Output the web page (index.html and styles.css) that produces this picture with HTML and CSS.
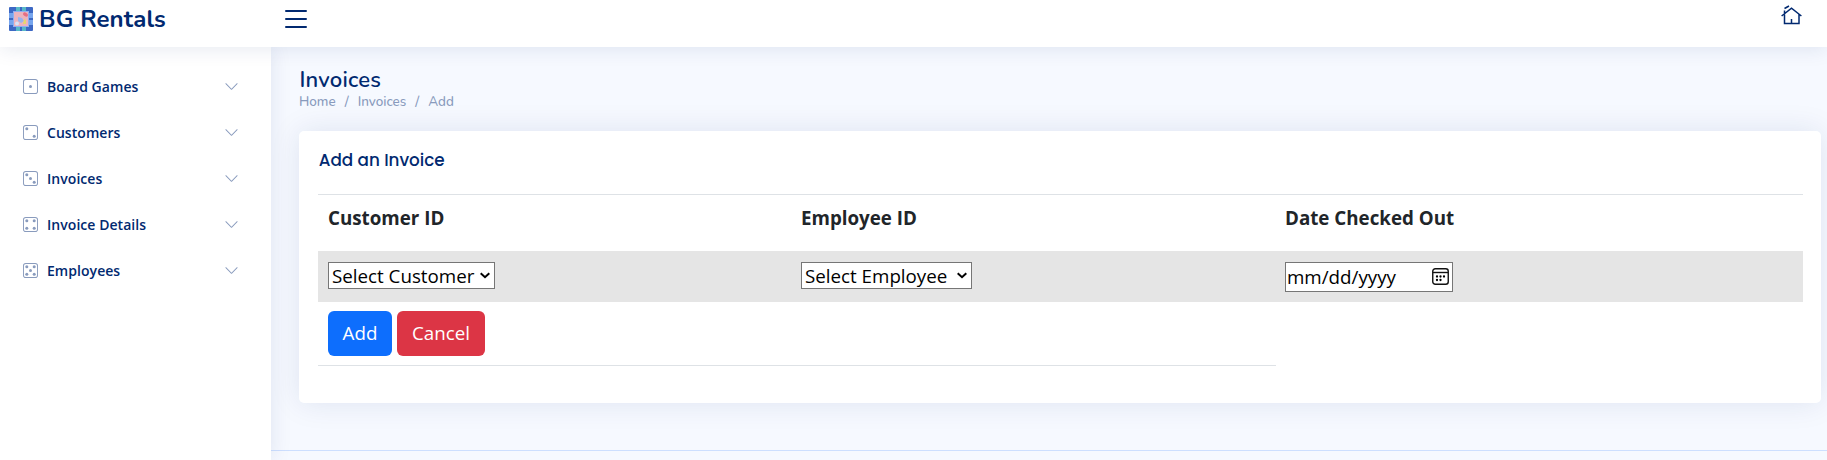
FILE: index.html
```html
<!DOCTYPE html>
<html lang="en">
<head>
<meta charset="utf-8">
<title>BG Rentals</title>
<link rel="stylesheet" href="styles.css">
</head>
<body>
<svg class="defs" width="0" height="0">
  <symbol id="die" viewBox="0 0 16 16"><path fill="currentColor" d="M13 1a2 2 0 0 1 2 2v10a2 2 0 0 1-2 2H3a2 2 0 0 1-2-2V3a2 2 0 0 1 2-2h10zM3 0a3 3 0 0 0-3 3v10a3 3 0 0 0 3 3h10a3 3 0 0 0 3-3V3a3 3 0 0 0-3-3H3z"/></symbol>
  <symbol id="chev" viewBox="0 0 16 16"><path fill="currentColor" fill-rule="evenodd" d="M1.646 4.646a.5.5 0 0 1 .708 0L8 10.293l5.646-5.647a.5.5 0 0 1 .708.708l-6 6a.5.5 0 0 1-.708 0l-6-6a.5.5 0 0 1 0-.708z"/></symbol>
  <symbol id="arrow" viewBox="0 0 10 7"><path fill="none" stroke="#000" stroke-width="2" d="M.7 1.200 5 5.200 9.300 1.200"/></symbol>
</svg>
<header class="header">
  <a class="logo">
    <svg class="logo-img" viewBox="0 0 24 24"><rect width="24" height="24" rx="1" fill="#3d68c4"/><path fill="#57b8c8" d="M7 0h4v4H7zM13 0h4v4h-4zM7 20h4v4H7zM13 20h4v4h-4z"/><path fill="#76a5ee" d="M0 6h4v5H0zM0 13h4v5H0zM20 6h4v5h-4zM20 13h4v5h-4z"/><rect x="4" y="4" width="16" height="16" fill="#91aef0"/><rect x="5" y="5" width="14" height="14" fill="#edb3bd"/><ellipse cx="16.500" cy="7.500" rx="2.700" ry="1.800" transform="rotate(30 16.500 7.500)" fill="#e56f84"/><path fill="#9ab4ef" d="M9 10l4 1 2 3-3 2-3-2z"/><circle cx="8" cy="16.500" r="2" fill="#d9e2f6"/><path fill="#e5d66f" d="M15 12l2 1v4h-3z"/></svg>
    <span class="brand">BG Rentals</span>
  </a>
  <svg class="burger" viewBox="0 0 16 16"><path fill="currentColor" fill-rule="evenodd" d="M2.500 12a.5.5 0 0 1 .5-.5h10a.5.5 0 0 1 0 1H3a.5.5 0 0 1-.5-.5zm0-4a.5.5 0 0 1 .5-.5h10a.5.5 0 0 1 0 1H3a.5.5 0 0 1-.5-.5zm0-4a.5.5 0 0 1 .5-.5h10a.5.5 0 0 1 0 1H3a.5.5 0 0 1-.5-.5z"/></svg>
  <svg class="home" viewBox="0 0 21 20"><path fill="none" stroke="currentColor" stroke-width="1.500" d="M.6 11 10.500 3.200 20.400 11M3.500 9.500V18.500h14.500V9.500M10.500 18.500V14M3.500 8V5.500M3.500 3.500 8 1"/></svg>
</header>
<div class="layout">
  <aside class="sidebar">
    <a class="item"><svg class="die"><use href="#die"/><circle cx="7.500" cy="7.500" r="1.500"/></svg><span>Board Games</span><svg class="chev"><use href="#chev"/></svg></a>
    <a class="item"><svg class="die"><use href="#die"/><circle cx="3.800" cy="3.800" r="1.500"/><circle cx="11.200" cy="11.200" r="1.500"/></svg><span>Customers</span><svg class="chev"><use href="#chev"/></svg></a>
    <a class="item"><svg class="die"><use href="#die"/><circle cx="3.800" cy="3.800" r="1.500"/><circle cx="7.500" cy="7.500" r="1.500"/><circle cx="11.200" cy="11.200" r="1.500"/></svg><span>Invoices</span><svg class="chev"><use href="#chev"/></svg></a>
    <a class="item"><svg class="die"><use href="#die"/><circle cx="3.800" cy="3.800" r="1.500"/><circle cx="11.200" cy="3.800" r="1.500"/><circle cx="3.800" cy="11.200" r="1.500"/><circle cx="11.200" cy="11.200" r="1.500"/></svg><span>Invoice Details</span><svg class="chev"><use href="#chev"/></svg></a>
    <a class="item"><svg class="die"><use href="#die"/><circle cx="3.800" cy="3.800" r="1.500"/><circle cx="11.200" cy="3.800" r="1.500"/><circle cx="7.500" cy="7.500" r="1.500"/><circle cx="3.800" cy="11.200" r="1.500"/><circle cx="11.200" cy="11.200" r="1.500"/></svg><span>Employees</span><svg class="chev"><use href="#chev"/></svg></a>
  </aside>
  <div class="content">
    <main class="main">
      <h1 class="title">Invoices</h1>
      <nav class="crumbs"><span>Home</span><span class="sep">/</span><span>Invoices</span><span class="sep">/</span><span>Add</span></nav>
      <section class="card">
        <h5 class="card-title">Add an Invoice</h5>
        <table class="table">
          <colgroup><col class="col-a"><col class="col-b"><col class="col-c"></colgroup>
          <tr class="head"><th>Customer ID</th><th>Employee ID</th><th>Date Checked Out</th></tr>
          <tr class="fields">
            <td><div class="field customer" role="combobox"><span>Select Customer</span><svg class="arrow"><use href="#arrow"/></svg></div></td>
            <td><div class="field employee" role="combobox"><span>Select Employee</span><svg class="arrow"><use href="#arrow"/></svg></div></td>
            <td><div class="field date"><span>mm/dd/yyyy</span><svg class="calendar" viewBox="0 0 17 17"><rect x=".75" y=".75" width="15.500" height="15.500" rx="2.500" fill="none" stroke="#111" stroke-width="1.400"/><path stroke="#111" stroke-width="1.400" d="M1 4.500h15"/><g fill="#000"><circle cx="5" cy="8.500" r="1.150"/><circle cx="8.500" cy="8.500" r="1.150"/><circle cx="12" cy="8.500" r="1.150"/><circle cx="5" cy="12" r="1.150"/><circle cx="8.500" cy="12" r="1.150"/></g></svg></div></td>
          </tr>
          <tr class="actions"><td colspan="2"><div class="buttons"><button class="btn add">Add</button><button class="btn cancel">Cancel</button></div></td></tr>
        </table>
      </section>
    </main>
    <footer class="footer"></footer>
  </div>
</div>
</body>
</html>
```
FILE: styles.css
```css
* { box-sizing: border-box; }
body { margin: 0; height: 460px; overflow: hidden; display: flex; flex-direction: column; background: #f6f9ff; font-family: "Open Sans", sans-serif; color: #212529; }
.defs { position: absolute; }
svg { flex: none; }
.header { position: relative; z-index: 3; height: 47px; flex: none; display: flex; align-items: flex-start; background: #fff; box-shadow: 0 2px 20px rgba(1, 41, 112, .1); padding-left: 9px; color: #012970; }
.logo { display: flex; width: 271px; }
.logo-img { width: 24px; height: 24px; margin-top: 7px; }
.brand { font: 700 24px/38px Nunito, Lato, sans-serif; margin-left: 6px; white-space: nowrap; letter-spacing: .15px; }
.burger { width: 32px; height: 32px; margin-top: 3px; }
.home { width: 21px; height: 20px; margin: 5px 25px 0 auto; }
.layout { flex: 1; display: flex; min-height: 0; }
.sidebar { position: relative; z-index: 2; width: 271px; flex: none; background: #fff; box-shadow: 0 0 20px rgba(1, 41, 112, .1); padding: 18px 32px 0 23px; }
.item { display: flex; align-items: center; height: 42px; margin-bottom: 4px; font-size: 14px; font-weight: 600; color: #012970; }
.item span { margin-left: 9px; letter-spacing: .05px; }
.die { width: 15px; height: 15px; color: #899bbd; fill: #899bbd; }
.chev { width: 15px; height: 15px; margin-left: auto; color: #899bbd; }
.content { flex: 1; display: flex; flex-direction: column; min-width: 0; }
.main { padding: 18px 6px 0 28px; height: 403px; flex: none; }
.title { margin: 0; height: 28px; font: 600 22px/31px Nunito, Lato, sans-serif; color: #012970; letter-spacing: .2px; padding-left: .5px; }
.crumbs { height: 38px; display: flex; font: 500 13.500px/17px Nunito, Lato, sans-serif; color: #899bbd; }
.sep { padding: 0 9px; }
.card { height: 272px; background: #fff; border-radius: 5px; box-shadow: 0 0 30px rgba(1, 41, 112, .1); padding: 18px 18px 0 19px; }
.card-title { margin: 0; height: 45px; font: 500 16.800px/23px Poppins, Inter, sans-serif; color: #012970; padding-left: .7px; }
.table { width: 1485px; table-layout: fixed; border-collapse: separate; border-spacing: 0; }
.col-a { width: 475px; }
.col-b { width: 483px; }
.col-c { width: 527px; }
.table th, .table td { padding: 0 8px; text-align: left; vertical-align: top; }
.head th { height: 57px; border-top: 1px solid #dee2e6; font-size: 18.750px; font-weight: 700; line-height: 46px; }
.fields td { height: 51px; background: #e5e5e5; padding-top: 11px; }
.table td:first-child, .table th:first-child { padding-left: 10px; }
.table th:last-child, .fields td:last-child { padding-left: 9px; }
.field { display: flex; justify-content: space-between; border: 1px solid #767676; background: #fff; color: #000; font-size: 18.750px; line-height: 26px; height: 27px; padding: 0 4px 0 3px; white-space: nowrap; }
.arrow { width: 10px; height: 7px; margin-top: 9px; }
.customer { width: 167px; }
.employee { width: 171px; }
.date { width: 168px; height: 30px; padding: 0 3px 0 1px; line-height: 27px; }
.calendar { width: 17px; height: 17px; margin-top: 5px; }
.actions td { height: 64px; border-bottom: 1px solid #dee2e6; }
.buttons { display: flex; gap: 5px; padding-top: 9px; }
.btn { height: 45px; border: 0; border-radius: 6px; padding: 0 0 2px; color: #fff; font: 400 18.750px "Open Sans", sans-serif; }
.add { width: 64px; background: #0d6efd; }
.cancel { width: 88px; background: #dc3545; }
.footer { border-top: 1px solid #cddfff; height: 10px; }
```
